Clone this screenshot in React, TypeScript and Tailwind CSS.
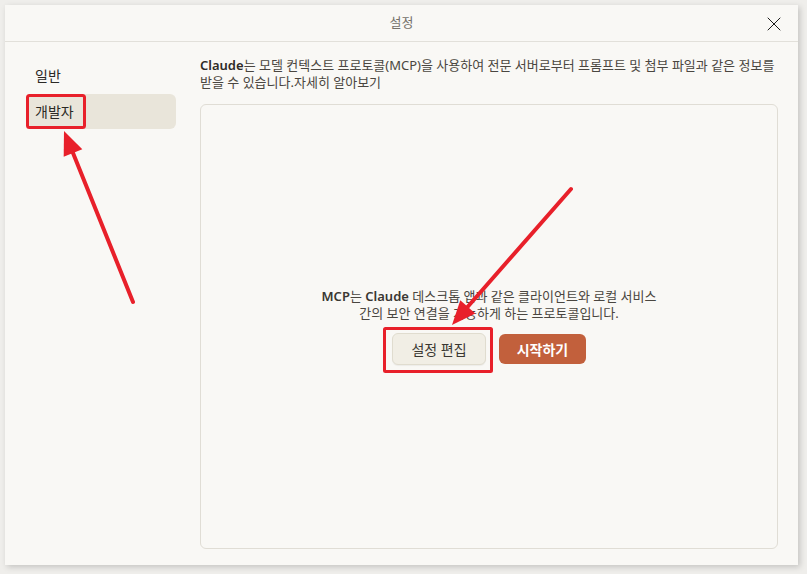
import { X } from "lucide-react"

const font = { fontFamily: '"Noto Sans", "Noto Sans CJK KR", sans-serif' }

const Annotations = () => (
    <svg className="pointer-events-none absolute inset-0" width={807} height={574}>
        {/* boxes */}
        <rect x={27.5} y={95.5} width={57} height={32} rx={2} fill="none" stroke="#e8202a" strokeWidth={3} />
        <rect x={384.5} y={328.5} width={107} height={43} rx={1} fill="none" stroke="#e8202a" strokeWidth={3} />
        {/* left arrow */}
        <line x1={133} y1={302} x2={71} y2={148} stroke="#e8202a" strokeWidth={4} strokeLinecap="round" />
        <polygon points="64,131 82.3,149.3 63.7,156.7" fill="#e8202a" />
        {/* right arrow */}
        <line x1={571} y1={189} x2={464} y2={311} stroke="#e8202a" strokeWidth={4} strokeLinecap="round" />
        <polygon points="452,325 475.3,313.5 460.3,300.3" fill="#e8202a" />
    </svg>
)

export default function App() {
    return (
        <div className="relative h-[574px] w-[807px] bg-[#efeeeb] pt-[5px] pl-[5px] pr-[9px] pb-[9px]" style={font}>
            <div className="flex h-full flex-col bg-[#f9f8f5] shadow-[2px_2px_6px_rgba(0,0,0,0.18)]">
                {/* Title bar */}
                <div className="relative flex h-[37px] shrink-0 items-center justify-center border-b border-[#e2e0da]">
                    <span className="text-[13px] text-[#75716a]">설정</span>
                    <X className="absolute right-[12px] top-[7px] h-[24px] w-[24px] text-black" strokeWidth={0.9} />
                </div>

                <div className="flex min-h-0 flex-1 pl-[21px] pr-[20px] pt-[16px] pb-[16px]">
                    {/* Sidebar */}
                    <nav className="flex w-[150px] shrink-0 flex-col gap-[1px]">
                        <div className="flex h-[35px] items-center px-[9px] text-[14px] text-[#2b2925]">일반</div>
                        <div className="flex h-[35px] items-center rounded-md bg-[#e9e5da] px-[9px] text-[14px] text-[#2b2925]">개발자</div>
                    </nav>

                    {/* Content */}
                    <div className="ml-[24px] -mt-[1px] flex min-w-0 flex-1 flex-col">
                        <p className="pr-[2px] text-[13px] leading-[17px] text-[#4a4640]">
                            <span className="font-semibold text-[#2e2b27]">Claude</span>는 모델 컨텍스트 프로토콜(MCP)을 사용하여 전문 서버로부터 프롬프트 및 첨부 파일과 같은 정보를 받을 수 있습니다.
                            <span className="text-[#4a4640]">자세히 알아보기</span>
                        </p>

                        <div className="mt-[13px] flex flex-1 flex-col items-center justify-center rounded-md border border-[#e0ddd5]">
                            <p className="text-center text-[13px] leading-[17px] text-[#4a4640]">
                                <span className="font-semibold text-[#3a3732]">MCP</span>는{" "}
                                <span className="font-semibold text-[#3a3732]">Claude</span> 데스크톱 앱과 같은 클라이언트와 로컬 서비스
                                <br />
                                간의 보안 연결을 가능하게 하는 프로토콜입니다.
                            </p>
                            <div className="mt-[11px] flex items-center gap-[13px]">
                                <button className="h-[32px] w-[94px] rounded-md border border-[#e0dccf] bg-[#f1eee5] text-[14px] text-[#3a3732] shadow-[0_1px_1px_rgba(0,0,0,0.05)]">
                                    설정 편집
                                </button>
                                <button className="h-[30px] w-[87px] rounded-md bg-[#c2603c] text-[14px] font-semibold text-white">
                                    시작하기
                                </button>
                            </div>
                        </div>
                    </div>
                </div>
            </div>
            <Annotations />
        </div>
    )
}
